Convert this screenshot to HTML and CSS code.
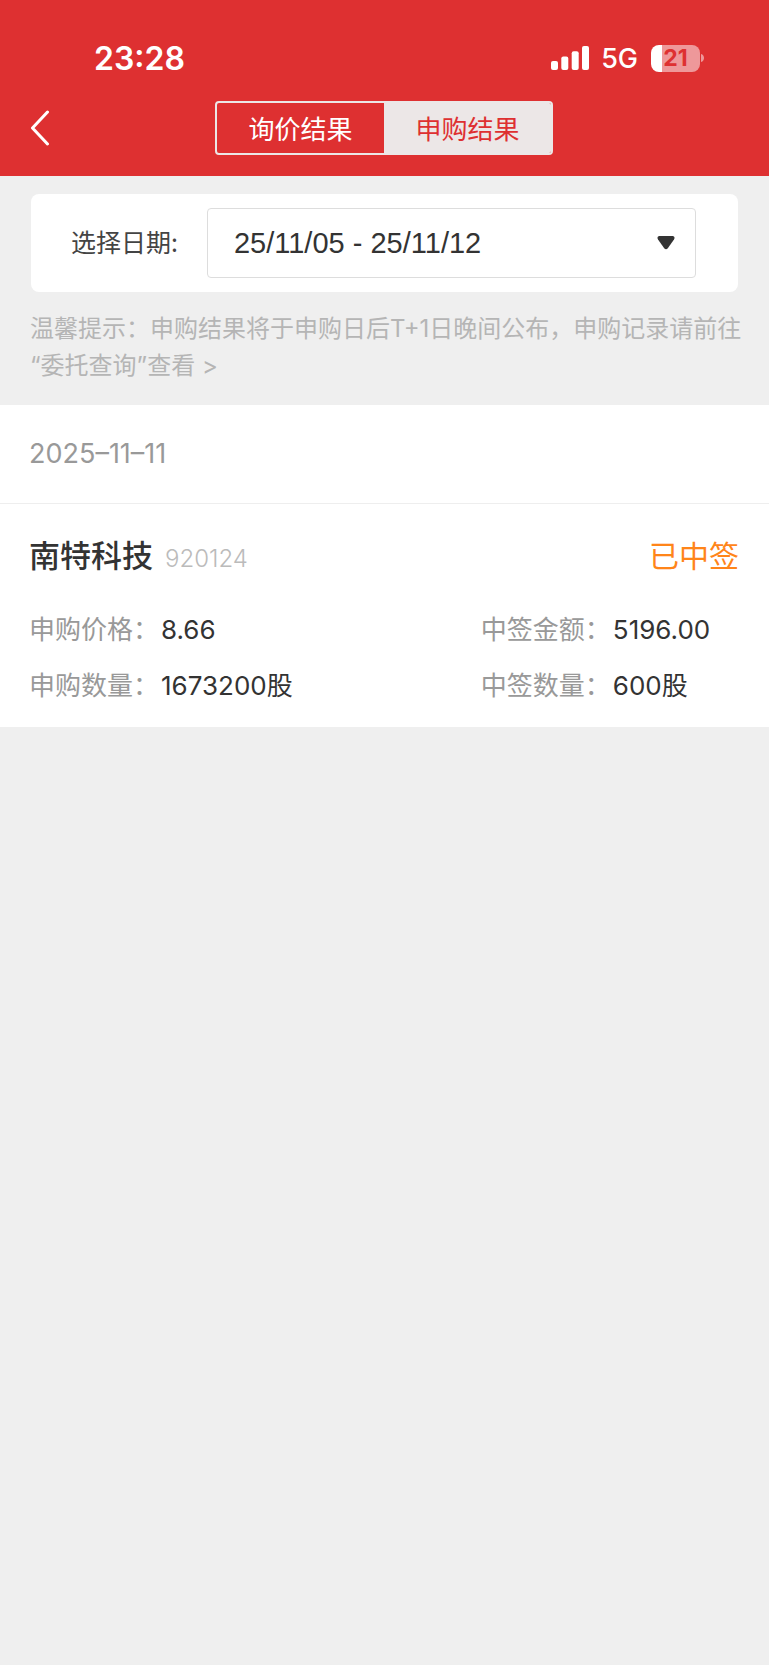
FILE: index.html
```html
<!DOCTYPE html>
<html lang="zh-CN">
<head>
<meta charset="utf-8">
<meta name="viewport" content="width=device-width, initial-scale=1">
<title>申购结果</title>
<link rel="stylesheet" href="styles.css">
</head>
<body>
<header class="header">
  <div class="status-bar">
    <span class="clock">23:28</span>
    <div class="status-icons">
      <svg class="signal" width="38" height="24" viewBox="0 0 38 24" aria-hidden="true">
        <rect x="0" y="15" width="7" height="9" rx="2"/>
        <rect x="10.300" y="10.500" width="7" height="13.500" rx="2"/>
        <rect x="20.700" y="5.200" width="7" height="18.800" rx="2"/>
        <rect x="31" y="0" width="7" height="24" rx="2"/>
      </svg>
      <span class="network">5G</span>
      <div class="battery">
        <span class="battery-body">21</span>
        <svg width="4" height="8" viewBox="0 0 4 8" aria-hidden="true"><path d="M0 0C4 1 4 7 0 8Z"/></svg>
      </div>
    </div>
  </div>
  <nav class="nav-bar">
    <button class="back" type="button" aria-label="返回">
      <svg width="20" height="36" viewBox="0 0 20 36" aria-hidden="true"><path d="M17.500 2 2.500 18 17.500 34"/></svg>
    </button>
    <div class="tabs">
      <button class="tab" type="button">询价结果</button>
      <button class="tab tab-active" type="button">申购结果</button>
    </div>
  </nav>
</header>
<main>
  <section class="filter">
    <div class="filter-card">
      <label class="filter-label" for="range">选择日期:</label>
      <div class="select-box">
        <select class="select" id="range"><option>25/11/05 - 25/11/12</option></select>
        <svg class="arrow" width="18" height="14" viewBox="0 0 18 14" aria-hidden="true"><path d="M2 0H16Q18.500 1 17 3.500L10.800 12.200Q9 14.400 7.200 12.200L1 3.500Q-.5 1 2 0Z"/></svg>
      </div>
    </div>
    <p class="tip">温馨提示：申购结果将于申购日后T+1日晚间公布，申购记录请前往<a class="tip-link" href="#">“委托查询”查看 &gt;</a></p>
  </section>
  <section class="results">
    <h2 class="date">2025–11–11</h2>
    <article class="item">
      <div class="item-head">
        <h3 class="name">南特科技</h3>
        <span class="code">920124</span>
        <span class="state">已中签</span>
      </div>
      <dl class="details">
        <div class="detail"><dt>申购价格：</dt><dd>8.66</dd></div>
        <div class="detail"><dt>中签金额：</dt><dd>5196.00</dd></div>
        <div class="detail"><dt>申购数量：</dt><dd>1673200股</dd></div>
        <div class="detail"><dt>中签数量：</dt><dd>600股</dd></div>
      </dl>
    </article>
  </section>
</main>
</body>
</html>
```
FILE: styles.css
```css
* {
  box-sizing: border-box;
}

body {
  margin: 0;
  min-height: 100vh;
  background: #efefef;
  color: #333;
  font-family: Inter, "Noto Sans CJK SC", sans-serif;
  font-size: 26px;
}

button,
select {
  font: inherit;
  cursor: pointer;
}

.header {
  background: #de3031;
  color: #fff;
  padding: 38px 0 21px;
}

.status-bar {
  display: flex;
  justify-content: space-between;
  align-items: center;
  height: 40px;
  padding: 0 64px 0 94px;
}

.clock {
  font-size: 32px;
  font-weight: 600;
}

.status-icons {
  display: flex;
  align-items: center;
}

.signal {
  fill: #fff;
  margin-right: 12px;
}

.network {
  font-size: 27px;
  font-weight: 500;
  margin-right: 13px;
}

.battery {
  display: flex;
  align-items: center;
  gap: 1px;
  fill: #ee989a;
}

.battery-body {
  width: 49px;
  height: 27px;
  border-radius: 8px;
  background: linear-gradient(90deg, #fff 22%, #ee989a 22%);
  color: #de3031;
  font-size: 23px;
  font-weight: 700;
  line-height: 27px;
  text-align: center;
}

.nav-bar {
  display: grid;
  grid-template-columns: 1fr auto 1fr;
  align-items: center;
  margin-top: 23px;
  padding: 0 31px 0 30px;
}

.back {
  display: flex;
  width: 20px;
  padding: 0;
  border: 0;
  background: none;
}

.back path {
  fill: none;
  stroke: #fff;
  stroke-width: 3;
  stroke-linecap: round;
  stroke-linejoin: round;
}

.tabs {
  display: flex;
  border: 2px solid #ece7e7;
  border-radius: 4px;
  overflow: hidden;
}

.tab {
  width: 167px;
  height: 50px;
  padding: 4px 0 0;
  border: 0;
  background: none;
  color: #fff;
  line-height: 46px;
}

.tab-active {
  background: #ece7e7;
  color: #de3031;
}

.filter {
  padding: 18px 24px 21px 30px;
}

.filter-card {
  display: flex;
  align-items: center;
  gap: 29px;
  margin: 0 7px 0 1px;
  padding: 14px 42px 14px 40px;
  border-radius: 8px;
  background: #fff;
}

.filter-label {
  padding-bottom: 4px;
  font-family: "Noto Sans CJK SC", sans-serif;
  font-size: 25px;
  color: #444;
}

.select-box {
  display: grid;
  flex: 1;
  align-items: center;
}

.select {
  grid-area: 1 / 1;
  width: 100%;
  height: 70px;
  padding: 0 26px;
  border: 1px solid #ddd;
  border-radius: 4px;
  background: #fff;
  color: #333;
  font-family: "Liberation Sans", Arial, sans-serif;
  font-size: 29px;
  appearance: none;
}

.arrow {
  grid-area: 1 / 1;
  justify-self: end;
  margin-right: 21px;
  fill: #333;
  pointer-events: none;
}

.tip {
  margin: 18px 0 0;
  color: #b5b5b5;
  font-size: 24px;
  line-height: 37px;
}

.tip-link {
  display: block;
  color: inherit;
  text-decoration: none;
}

.results {
  background: #fff;
}

.date {
  margin: 0;
  padding: 0 29px;
  border-bottom: 1px solid #eee;
  color: #999;
  font-size: 27px;
  font-weight: 400;
  line-height: 98px;
}

.item {
  padding: 30px 30px 13px 29px;
}

.item-head {
  display: flex;
  align-items: baseline;
  line-height: 44px;
}

.name {
  margin: 0 12px 0 0;
  font-size: 31px;
  font-weight: 500;
}

.code {
  color: #bbb;
  font-size: 24px;
  font-weight: 300;
}

.state {
  margin-left: auto;
  color: #ff8519;
  font-size: 30px;
}

.details {
  display: grid;
  grid-template-columns: 7fr 4fr;
  margin: 21px 0 0;
}

.detail {
  display: flex;
  align-items: baseline;
  gap: 2px;
  line-height: 56px;
}

.detail dt {
  color: #999;
}

.detail dd {
  margin: 0;
}
```
